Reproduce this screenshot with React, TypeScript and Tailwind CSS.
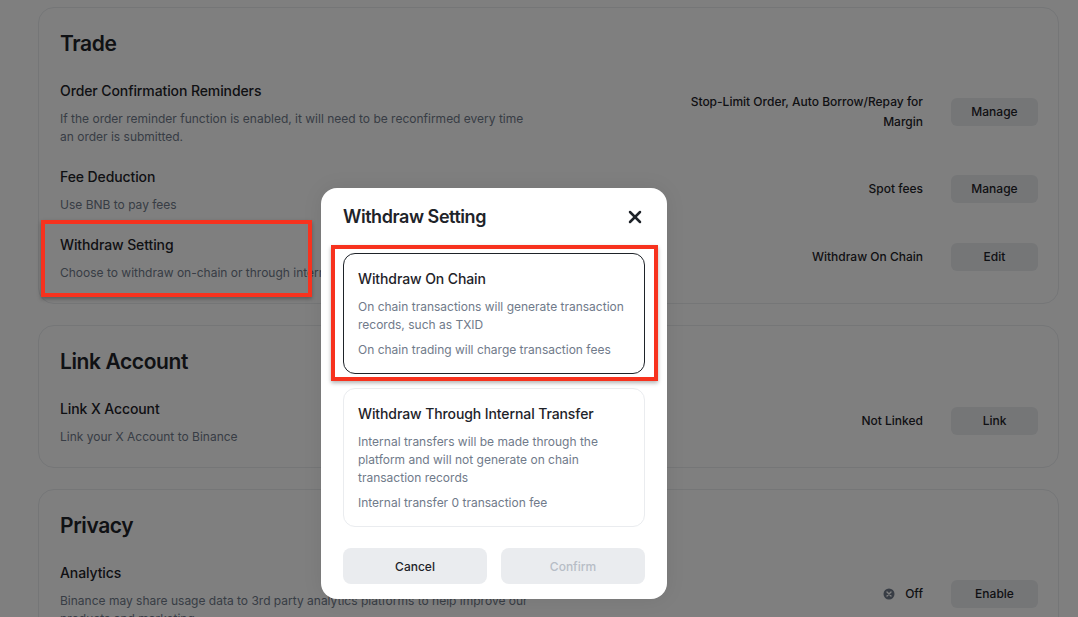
import React from 'react';
import { X } from 'lucide-react';

const FONT = "font-['Inter','Noto_Sans',sans-serif]";

function OffIcon() {
  return (
    <svg width="12" height="12" viewBox="0 0 12 12" className="mr-[10px]">
      <circle cx="6" cy="6" r="5.5" fill="#707a8a" />
      <path d="M4 4l4 4M8 4l-4 4" stroke="#fff" strokeWidth="1.4" strokeLinecap="round" />
    </svg>
  );
}

interface RowProps {
  title: string;
  desc: React.ReactNode;
  value: React.ReactNode;
  action: string;
}

function Row({ title, desc, value, action }: RowProps) {
  return (
    <div className="flex items-center justify-between">
      <div className="w-[470px]">
        <div className="text-[14px] leading-5 font-medium text-[#1e2329] tracking-[-0.1px]">{title}</div>
        <div className="mt-[9px] text-[12px] leading-[18px] text-[#707a8a]">{desc}</div>
      </div>
      <div className="flex items-center pb-[4px]">
        <div className="w-[240px] flex justify-end items-center text-right text-[12px] leading-5 font-medium text-[#1e2329]">
          {value}
        </div>
        <button className="ml-7 w-[87px] h-[28px] rounded-md bg-[#eaecef] text-[12px] font-medium text-[#1e2329]">
          {action}
        </button>
      </div>
    </div>
  );
}

function Section({ title, children }: { title: string; children: React.ReactNode }) {
  return (
    <section className="border border-[#eaecef] rounded-2xl pl-[21px] pr-[20px] pt-[20px] pb-[21px]">
      <h2 className="text-[21px] leading-8 font-semibold text-[#1e2329] tracking-[-0.4px]">{title}</h2>
      <div className="mt-[21px] flex flex-col gap-[21px]">{children}</div>
    </section>
  );
}

function Option({ title, lines, note, selected }: { title: string; lines: string[]; note: string; selected?: boolean }) {
  return (
    <div className={`rounded-xl border px-[14px] pt-[15px] pb-[14px] ${selected ? 'border-[#1e2329]' : 'border-[#eaecef]'}`}>
      <div className="text-[14px] leading-5 font-medium text-[#1e2329] tracking-[-0.1px]">{title}</div>
      <div className="mt-[9px] text-[12px] leading-[18px] text-[#707a8a]">
        {lines.map((line) => (
          <div key={line}>{line}</div>
        ))}
      </div>
      <div className="mt-[7px] text-[12px] leading-[18px] text-[#707a8a]">{note}</div>
    </div>
  );
}

export default function App() {
  return (
    <div className={`relative w-[1078px] h-[617px] overflow-hidden bg-white ${FONT}`}>
      <div className="pl-[38px] pr-[19px] pt-[7px] flex flex-col gap-[21px]">
        <Section title="Trade">
          <Row
            title="Order Confirmation Reminders"
            desc={
              <>
                If the order reminder function is enabled, it will need to be reconfirmed every time
                <br />
                an order is submitted.
              </>
            }
            value="Stop-Limit Order, Auto Borrow/Repay for Margin"
            action="Manage"
          />
          <Row title="Fee Deduction" desc="Use BNB to pay fees" value="Spot fees" action="Manage" />
          <Row
            title="Withdraw Setting"
            desc="Choose to withdraw on-chain or through internal transfer"
            value="Withdraw On Chain"
            action="Edit"
          />
        </Section>
        <Section title="Link Account">
          <Row title="Link X Account" desc="Link your X Account to Binance" value="Not Linked" action="Link" />
        </Section>
        <Section title="Privacy">
          <Row
            title="Analytics"
            desc={
              <>
                Binance may share usage data to 3rd party analytics platforms to help improve our
                <br />
                products and marketing
              </>
            }
            value={
              <>
                <OffIcon />
                Off
              </>
            }
            action="Enable"
          />
        </Section>
      </div>

      {/* backdrop + dialog */}
      <div className="absolute inset-0 bg-black/50 pl-[321px] pt-[188px]">
        <div className="w-[346px] h-[411px] bg-white rounded-2xl px-[22px] pt-[17px] shadow-[0_0_20px_rgba(0,0,0,0.08)]">
          <div className="flex items-center justify-between h-6">
            <div className="text-[18px] leading-6 font-semibold text-[#1e2329] tracking-[-0.45px]">Withdraw Setting</div>
            <X size={20} strokeWidth={3} className="text-[#1e2329]" />
          </div>
          <div className="mt-6 flex flex-col gap-[14px]">
            <Option
              selected
              title="Withdraw On Chain"
              lines={['On chain transactions will generate transaction', 'records, such as TXID']}
              note="On chain trading will charge transaction fees"
            />
            <Option
              title="Withdraw Through Internal Transfer"
              lines={['Internal transfers will be made through the', 'platform and will not generate on chain', 'transaction records']}
              note="Internal transfer 0 transaction fee"
            />
          </div>
          <div className="mt-[21px] flex gap-[14px]">
            <button className="flex-1 h-9 pt-px rounded-lg bg-[#eaecef] text-[12px] font-medium text-[#1e2329]">Cancel</button>
            <button className="flex-1 h-9 pt-px rounded-lg bg-[#eaecef] text-[12px] font-medium text-[#b7bdc6]">Confirm</button>
          </div>
        </div>
      </div>

      {/* annotation boxes */}
      <div className="absolute left-[41px] top-[220px] w-[271px] h-[77px] border-4 border-[#f7321e] shadow-[0_2px_4px_rgba(0,0,0,0.3)]" />
      <div className="absolute left-[331px] top-[245px] w-[327px] h-[136px] border-4 border-[#f7321e] shadow-[0_2px_4px_rgba(0,0,0,0.3)]" />
    </div>
  );
}
